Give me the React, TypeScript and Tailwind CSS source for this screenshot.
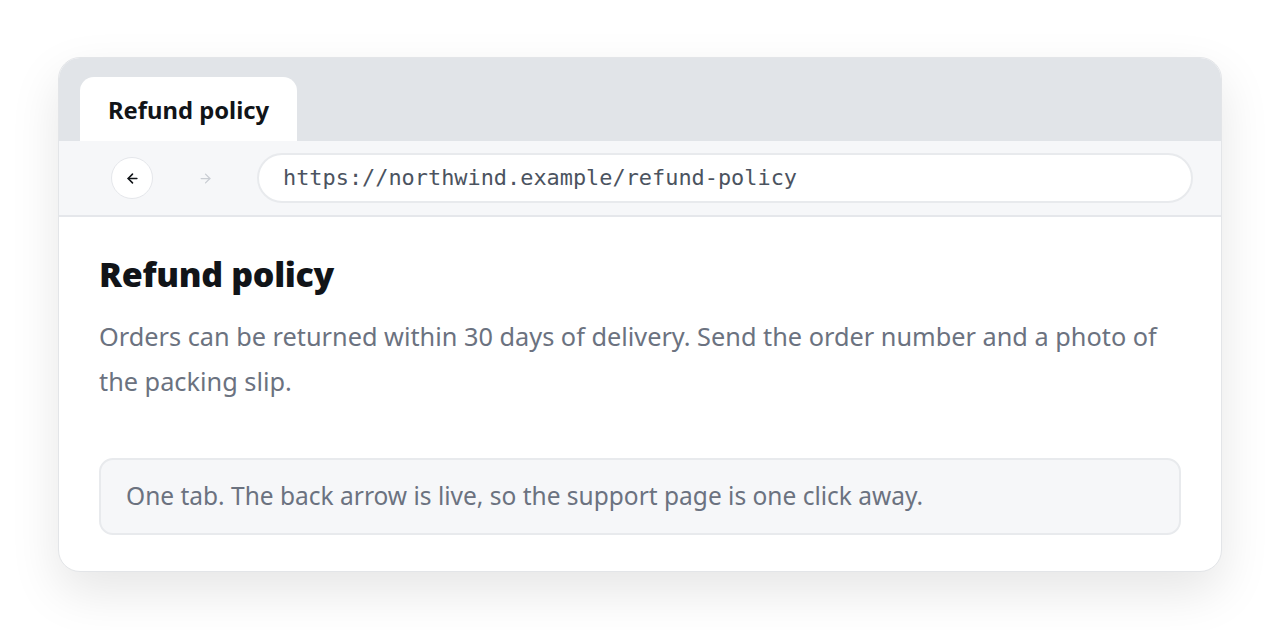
import { ArrowLeft, ArrowRight } from "lucide-react";

export default function App() {
  return (
    <div className="min-h-[630px] bg-white px-[58px] pt-[57px] font-['Noto_Sans',sans-serif]">
      <div className="overflow-hidden rounded-[22px] border border-[#e3e5e8] bg-white shadow-[0_20px_50px_rgba(0,0,0,0.10)]">
        {/* tab strip */}
        <div className="flex h-[83px] items-end bg-[#e1e4e8] px-[21px]">
          <div className="flex h-[64px] items-center rounded-t-[14px] bg-white px-[28px] pt-[3px] text-[23.8px] font-bold text-[#111418]">
            Refund policy
          </div>
        </div>

        {/* toolbar */}
        <div className="flex h-[76px] items-center border-b-2 border-[#e5e7eb] bg-[#f6f7f9] pl-[52px] pr-[28px]">
          <button className="flex h-[42px] w-[42px] items-center justify-center rounded-full border border-[#e5e7eb] bg-white text-[#111418]">
            <ArrowLeft className="h-[15px] w-[15px]" strokeWidth={2.5} />
          </button>
          <div className="ml-[31px] flex h-[42px] w-[42px] items-center justify-center text-[#c9cdd3]">
            <ArrowRight className="h-[15px] w-[15px]" strokeWidth={2} />
          </div>
          <div className="ml-[31px] flex h-[50px] flex-1 items-center rounded-full border-2 border-[#e8eaed] bg-white px-[24px] font-['DejaVu_Sans_Mono',monospace] text-[21.9px] text-[#4b5360]">
            https://northwind.example/refund-policy
          </div>
        </div>

        {/* page */}
        <div className="px-[40px] pb-[36px] pt-[35px]">
          <h1 className="text-[34px] font-black leading-[44px] tracking-[-0.3px] text-[#111418]">
            Refund policy
          </h1>
          <p className="mt-[18px] text-[25.3px] leading-[45px] text-[#6b7280]">
            Orders can be returned within 30 days of delivery. Send the order number and a photo of the packing slip.
          </p>
          <div className="mt-[54px] flex h-[77px] items-center rounded-[14px] border-2 border-[#e8eaed] bg-[#f6f7f9] px-[25px] text-[24.5px] text-[#6b7280]">
            One tab. The back arrow is live, so the support page is one click away.
          </div>
        </div>
      </div>
    </div>
  );
}
